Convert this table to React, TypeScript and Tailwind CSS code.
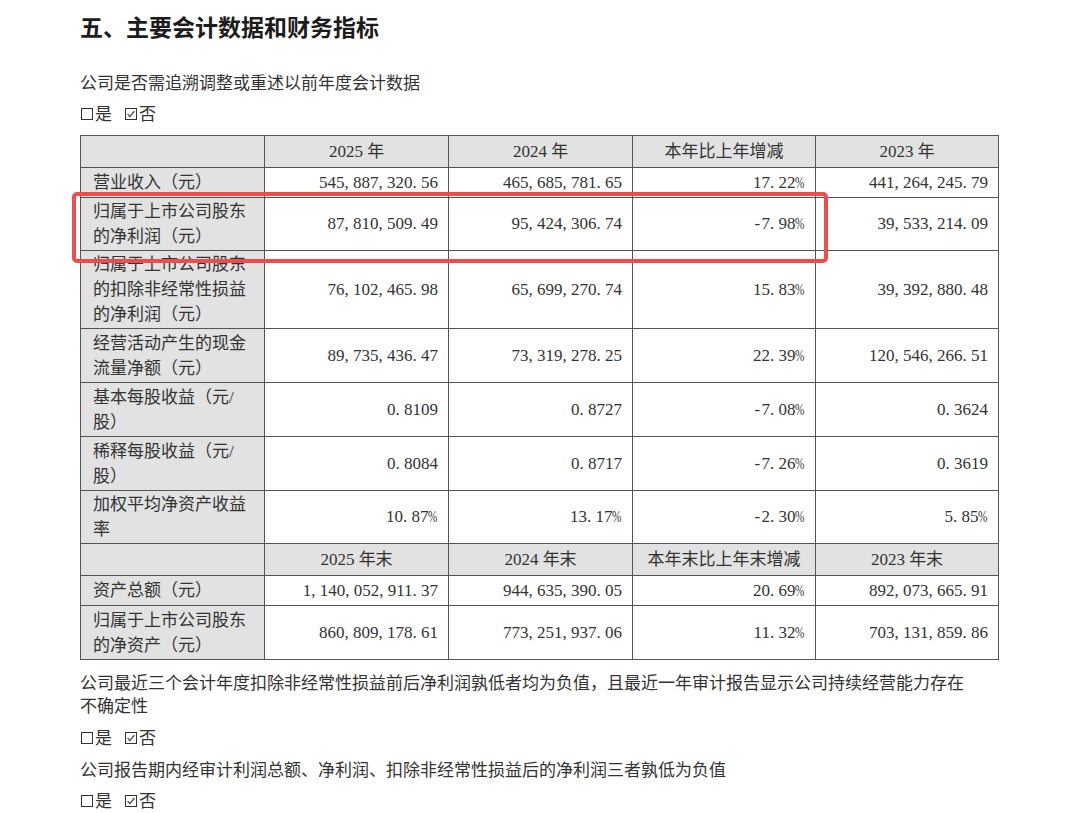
import React from 'react';

type Row = { label: string[]; values: string[]; h: string };

const sans = "font-['Noto_Sans_CJK_SC','Noto_Sans',sans-serif]";
const song = "font-['Liberation_Serif','Noto_Sans_CJK_SC',serif]";

const topRows: Row[] = [
  { label: ['营业收入（元）'], values: ['545,887,320.56', '465,685,781.65', '17.22%', '441,264,245.79'], h: 'h-[30px]' },
  { label: ['归属于上市公司股东', '的净利润（元）'], values: ['87,810,509.49', '95,424,306.74', '-7.98%', '39,533,214.09'], h: 'h-[53px]' },
  {
    label: ['归属于上市公司股东', '的扣除非经常性损益', '的净利润（元）'],
    values: ['76,102,465.98', '65,699,270.74', '15.83%', '39,392,880.48'],
    h: 'h-[78px]',
  },
  { label: ['经营活动产生的现金', '流量净额（元）'], values: ['89,735,436.47', '73,319,278.25', '22.39%', '120,546,266.51'], h: 'h-[54px]' },
  { label: ['基本每股收益（元/', '股）'], values: ['0.8109', '0.8727', '-7.08%', '0.3624'], h: 'h-[54px]' },
  { label: ['稀释每股收益（元/', '股）'], values: ['0.8084', '0.8717', '-7.26%', '0.3619'], h: 'h-[54px]' },
  { label: ['加权平均净资产收益', '率'], values: ['10.87%', '13.17%', '-2.30%', '5.85%'], h: 'h-[53px]' },
];

const bottomRows: Row[] = [
  { label: ['资产总额（元）'], values: ['1,140,052,911.37', '944,635,390.05', '20.69%', '892,073,665.91'], h: 'h-[30px]' },
  { label: ['归属于上市公司股东', '的净资产（元）'], values: ['860,809,178.61', '773,251,937.06', '11.32%', '703,131,859.86'], h: 'h-[54px]' },
];

// half-width punctuation, spaced the way the printed report sets it
const Num = ({ v }: { v: string }) => (
  <>
    {v.split('').map((c, i) => {
      if (c === ',' || c === '.') return <span key={i} className="inline-block w-[0.5em] text-left">{c}</span>;
      if (c === '-') return <span key={i} className="inline-block w-[0.5em] text-center">-</span>;
      if (c === '%')
        return (
          <span key={i} className="inline-block w-[0.56em] text-left">
            <span className="inline-block origin-left scale-x-[0.66]">%</span>
          </span>
        );
      return <React.Fragment key={i}>{c}</React.Fragment>;
    })}
  </>
);

const cell = 'border border-[#555] px-0 align-middle';
const gray = 'bg-[#e2e2e2]';

const HeadRow = ({ cols }: { cols: string[] }) => (
  <tr className="h-[32px]">
    <td className={`${cell} ${gray}`} />
    {cols.map((c) => (
      <td key={c} className={`${cell} ${gray} text-center`}>{c}</td>
    ))}
  </tr>
);

const DataRow = ({ r }: { r: Row }) => (
  <tr className={r.h}>
    <td className={`${cell} ${gray} pl-[12px] pr-[6px] leading-[25px]`}>
      {r.label.map((l) => (
        <div key={l}>{l}</div>
      ))}
    </td>
    {r.values.map((v, i) => (
      <td key={i} className={`${cell} pr-[10px] text-right`}>
        <Num v={v} />
      </td>
    ))}
  </tr>
);

const Box = ({ checked }: { checked?: boolean }) => (
  <svg viewBox="0 0 14 14" className="mr-[1px] inline-block h-[14px] w-[14px] align-[-1px]">
    <rect x="1.5" y="1.5" width="11" height="11" fill="none" stroke="#333" strokeWidth="1" />
    {checked && <path d="M3.6 7.2 L5.9 9.6 L10.4 4.2" fill="none" stroke="#333" strokeWidth="1.2" />}
  </svg>
);

const Check = () => (
  <div className={`${sans} text-[17px] leading-[24px] text-[#333]`}>
    <Box />是
    <span className="ml-[12px]">
      <Box checked />否
    </span>
  </div>
);

export default function App() {
  return (
    <div className="relative min-h-[813px] w-[1080px] bg-white pl-[80px]">
      <h1 className={`${sans} pt-[10px] text-[23px] font-bold leading-[32px] text-[#1c1c1c]`}>
        五、主要会计数据和财务指标
      </h1>
      <p className={`${sans} mt-[28px] text-[17px] leading-[24px] text-[#333]`}>公司是否需追溯调整或重述以前年度会计数据</p>
      <div className="mt-[7px]">
        <Check />
      </div>

      <table className={`${song} mt-[10px] w-[918px] table-fixed border-collapse text-[17px] text-[#333]`}>
        <colgroup>
          <col className="w-[184px]" />
          <col className="w-[184px]" />
          <col className="w-[184px]" />
          <col className="w-[183px]" />
          <col className="w-[183px]" />
        </colgroup>
        <tbody>
          <HeadRow cols={['2025 年', '2024 年', '本年比上年增减', '2023 年']} />
          {topRows.map((r) => (
            <DataRow key={r.label.join('')} r={r} />
          ))}
          <HeadRow cols={['2025 年末', '2024 年末', '本年末比上年末增减', '2023 年末']} />
          {bottomRows.map((r) => (
            <DataRow key={r.label.join('')} r={r} />
          ))}
        </tbody>
      </table>

      <p className={`${sans} mt-[10px] w-[893px] text-[17px] leading-[23px] text-[#333]`}>
        公司最近三个会计年度扣除非经常性损益前后净利润孰低者均为负值，且最近一年审计报告显示公司持续经营能力存在不确定性
      </p>
      <div className="mt-[9px]">
        <Check />
      </div>
      <p className={`${sans} mt-[8px] text-[17px] leading-[24px] text-[#333]`}>
        公司报告期内经审计利润总额、净利润、扣除非经常性损益后的净利润三者孰低为负值
      </p>
      <div className="mt-[7px]">
        <Check />
      </div>

      {/* highlight around the net profit row */}
      <div className="absolute left-[72px] top-[192px] h-[71px] w-[756px] rounded-[5px] border-[4px] border-[#ef4c4c]" />
    </div>
  );
}
